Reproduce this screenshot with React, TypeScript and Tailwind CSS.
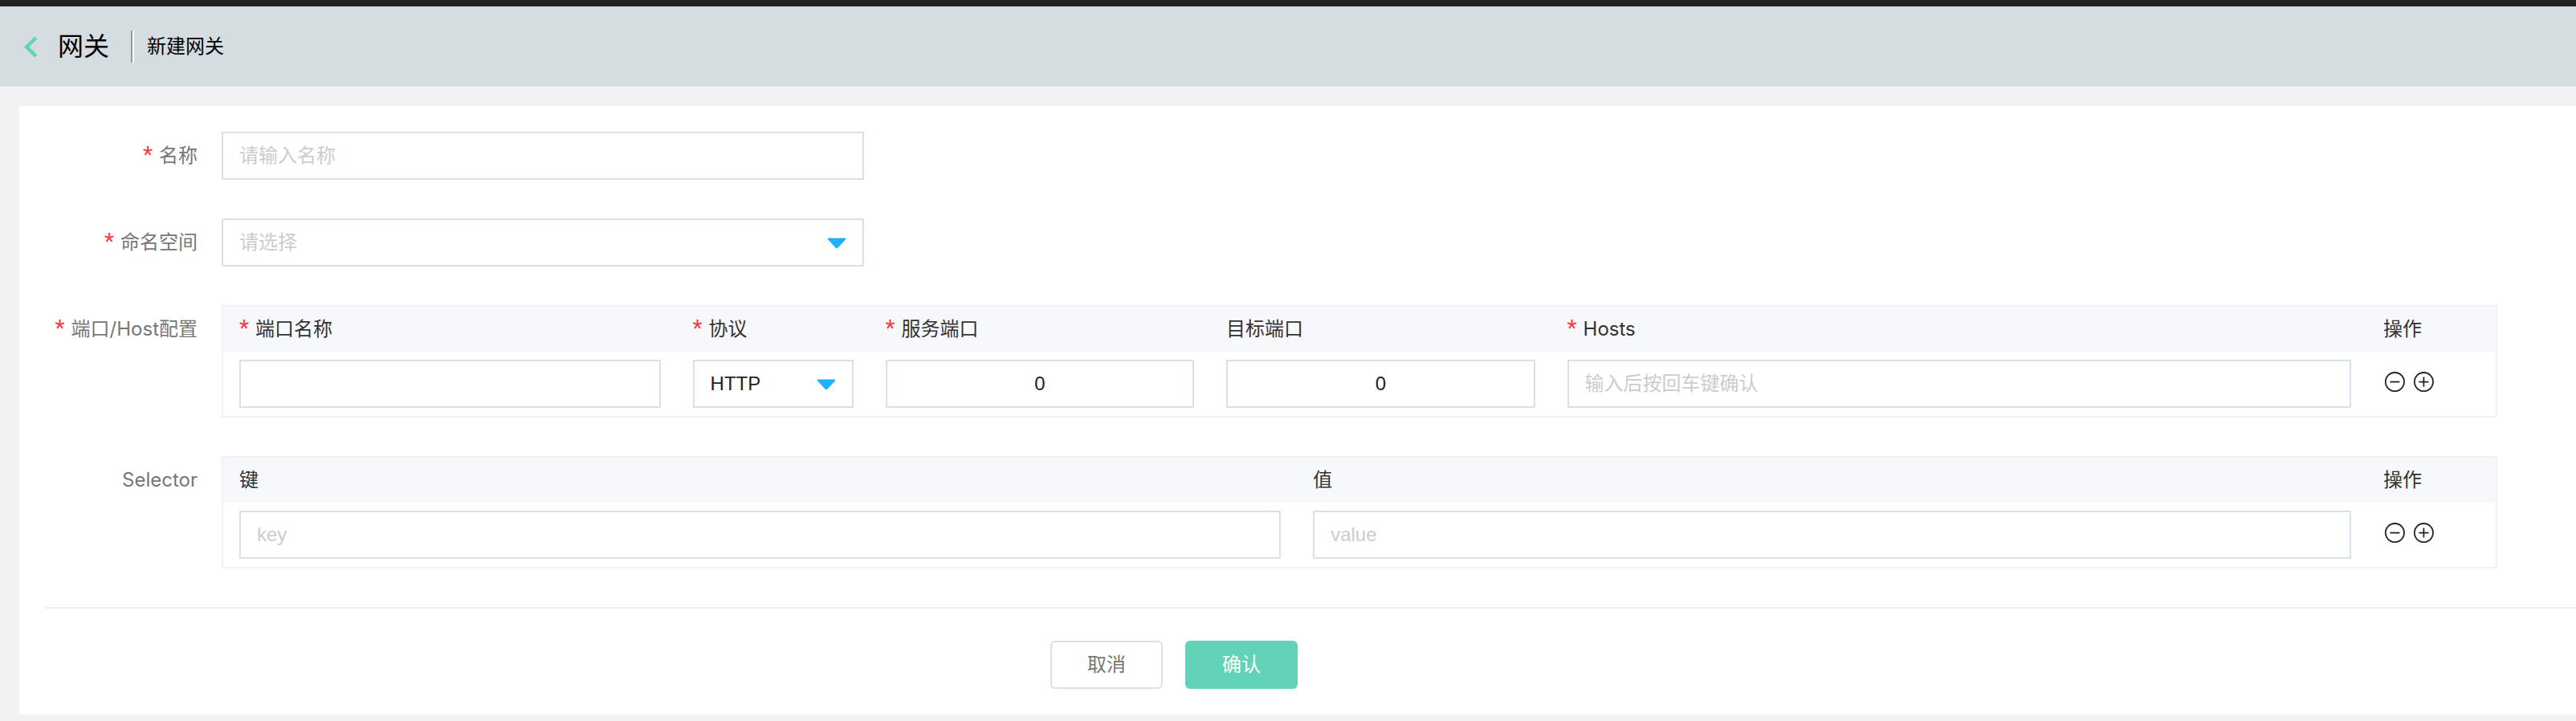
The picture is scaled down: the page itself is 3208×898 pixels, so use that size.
import type { ReactNode } from 'react'

const inputClass =
  "block h-[60px] w-full min-w-0 border-2 border-[#d8e1e8] bg-white px-5 font-['Liberation_Sans','Noto_Sans_CJK_SC',sans-serif] text-2xl text-[#222] placeholder:text-[#ccc] outline-none focus:border-[#62d3b8]"

function Star() {
  return (
    <span aria-hidden="true" className="inline-block w-5 text-left font-['Roboto'] text-[28px] leading-none text-[#fa3c3c]">
      *
    </span>
  )
}

function RowLabel({ children, required, htmlFor, id }: { children: ReactNode; required?: boolean; htmlFor?: string; id?: string }) {
  const cls = 'block w-[220px] shrink-0 pr-[30px] text-right leading-[60px] whitespace-nowrap text-[#777]'
  const content = (
    <>
      {required && <Star />}
      {children}
    </>
  )
  return htmlFor ? (
    <label htmlFor={htmlFor} className={cls}>
      {content}
    </label>
  ) : (
    <span id={id} className={cls}>
      {content}
    </span>
  )
}

function Select({ id, label, options, placeholder }: { id: string; label?: string; options: string[]; placeholder?: string }) {
  return (
    <div className="relative">
      <select
        id={id}
        aria-label={label}
        defaultValue={placeholder ? '' : options[0]}
        className={`${inputClass} appearance-none pr-14 ${placeholder ? 'text-[#ccc]' : ''}`}
      >
        {placeholder && <option value="">{placeholder}</option>}
        {options.map((o) => (
          <option key={o} value={o}>
            {o}
          </option>
        ))}
      </select>
      <svg
        aria-hidden="true"
        viewBox="0 0 24 14"
        className="pointer-events-none absolute top-6 right-[22px] h-[14px] w-6 fill-[#1fb0ff]"
      >
        <path d="M1.8 0.4H22.2Q24 0.6 23 2.2L13.6 12.6Q12 14 10.4 12.6L1 2.2Q0 0.6 1.8 0.4Z" />
      </svg>
    </div>
  )
}

function RowActions() {
  return (
    <div className="flex gap-2 pb-1">
      <button type="button" aria-label="删除" className="block">
        <svg viewBox="0 0 28 28" className="block size-7 fill-none stroke-[#222] stroke-[1.8]">
          <circle cx="14.4" cy="13.6" r="11.6" />
          <path d="M8.4 13.6H20.4" />
        </svg>
      </button>
      <button type="button" aria-label="添加" className="block">
        <svg viewBox="0 0 28 28" className="block size-7 fill-none stroke-[#222] stroke-[1.8]">
          <circle cx="14.4" cy="13.6" r="11.6" />
          <path d="M8.4 13.6H20.4M14.4 7.6V19.6" />
        </svg>
      </button>
    </div>
  )
}

function Th({ children, required, className = '' }: { children: ReactNode; required?: boolean; className?: string }) {
  return (
    <th scope="col" className={`h-14 px-5 py-0 text-left font-normal whitespace-nowrap ${className}`}>
      {required && <Star />}
      {children}
    </th>
  )
}

function Td({ children }: { children: ReactNode }) {
  return <td className="px-5 py-2.5">{children}</td>
}

function TableFrame({ children, labelledBy }: { children: ReactNode; labelledBy: string }) {
  return (
    <div className="mr-[98px] min-w-0 flex-1 border-2 border-[#f0f1f6]">
      <table aria-labelledby={labelledBy} className="w-full table-fixed border-collapse text-[#333]">
        {children}
      </table>
    </div>
  )
}

export default function App() {
  return (
    <div className="min-h-screen bg-[#f2f2f4] pb-2 font-['Inter','Noto_Sans_CJK_SC',sans-serif] text-2xl text-[#222]">
      <div className="h-2 bg-[#222]" />
      <header className="flex h-[100px] items-center bg-[#d5dde0] pl-7 text-black">
        <a href="#" aria-label="返回" className="block">
          <svg viewBox="0 0 20 28" className="block h-7 w-5 fill-none stroke-[#62d3b8] stroke-[4.6]">
            <path d="M16.6 3L5.3 14.4L16.6 25.8" />
          </svg>
        </a>
        <h1 className="ml-6 text-[32px] leading-10">网关</h1>
        <div className="ml-[27px] h-10 w-1 border-r-2 border-l-2 border-r-white border-l-[#999]" />
        <span className="ml-4">新建网关</span>
      </header>

      <main className="mt-6 ml-6 bg-white pt-8 pb-8 pl-8">
        <form className="flex flex-col gap-12">
          <div className="flex">
            <RowLabel required htmlFor="name">
              名称
            </RowLabel>
            <div className="w-[800px]">
              <input id="name" type="text" placeholder="请输入名称" className={inputClass} />
            </div>
          </div>

          <div className="flex">
            <RowLabel required htmlFor="namespace">
              命名空间
            </RowLabel>
            <div className="w-[800px]">
              <Select id="namespace" placeholder="请选择" options={['default']} />
            </div>
          </div>

          <div className="flex">
            <RowLabel required id="ports-label">
              端口/Host配置
            </RowLabel>
            <TableFrame labelledBy="ports-label">
              <thead className="bg-[#f7f8fc]">
                <tr>
                  <Th required className="w-[19.95%]">
                    端口名称
                  </Th>
                  <Th required className="w-60">
                    协议
                  </Th>
                  <Th required className="w-[15%]">
                    服务端口
                  </Th>
                  <Th className="w-[15%]">目标端口</Th>
                  <Th required>Hosts</Th>
                  <Th className="w-40">操作</Th>
                </tr>
              </thead>
              <tbody>
                <tr>
                  <Td>
                    <input type="text" aria-label="端口名称" className={inputClass} />
                  </Td>
                  <Td>
                    <Select id="protocol" label="协议" options={['HTTP', 'HTTPS', 'TCP', 'GRPC']} />
                  </Td>
                  <Td>
                    <input type="text" inputMode="numeric" aria-label="服务端口" defaultValue="0" className={`${inputClass} text-center`} />
                  </Td>
                  <Td>
                    <input type="text" inputMode="numeric" aria-label="目标端口" defaultValue="0" className={`${inputClass} text-center`} />
                  </Td>
                  <Td>
                    <input type="text" aria-label="Hosts" placeholder="输入后按回车键确认" className={inputClass} />
                  </Td>
                  <Td>
                    <RowActions />
                  </Td>
                </tr>
              </tbody>
            </TableFrame>
          </div>

          <div className="flex">
            <RowLabel id="selector-label">Selector</RowLabel>
            <TableFrame labelledBy="selector-label">
              <thead className="bg-[#f7f8fc]">
                <tr>
                  <Th className="w-[47.25%]">键</Th>
                  <Th>值</Th>
                  <Th className="w-40">操作</Th>
                </tr>
              </thead>
              <tbody>
                <tr>
                  <Td>
                    <input type="text" aria-label="键" placeholder="key" className={inputClass} />
                  </Td>
                  <Td>
                    <input type="text" aria-label="值" placeholder="value" className={inputClass} />
                  </Td>
                  <Td>
                    <RowActions />
                  </Td>
                </tr>
              </tbody>
            </TableFrame>
          </div>

          <div className="flex justify-center gap-7 border-t-2 border-[#ededef] pt-10 pr-[340px]">
            <button type="button" className="h-[60px] w-[140px] rounded-md border-2 border-[#d8e1e8] bg-white text-[#777]">
              取消
            </button>
            <button type="submit" className="h-[60px] w-[140px] rounded-md bg-[#62d3b8] text-white">
              确认
            </button>
          </div>
        </form>
      </main>
    </div>
  )
}
